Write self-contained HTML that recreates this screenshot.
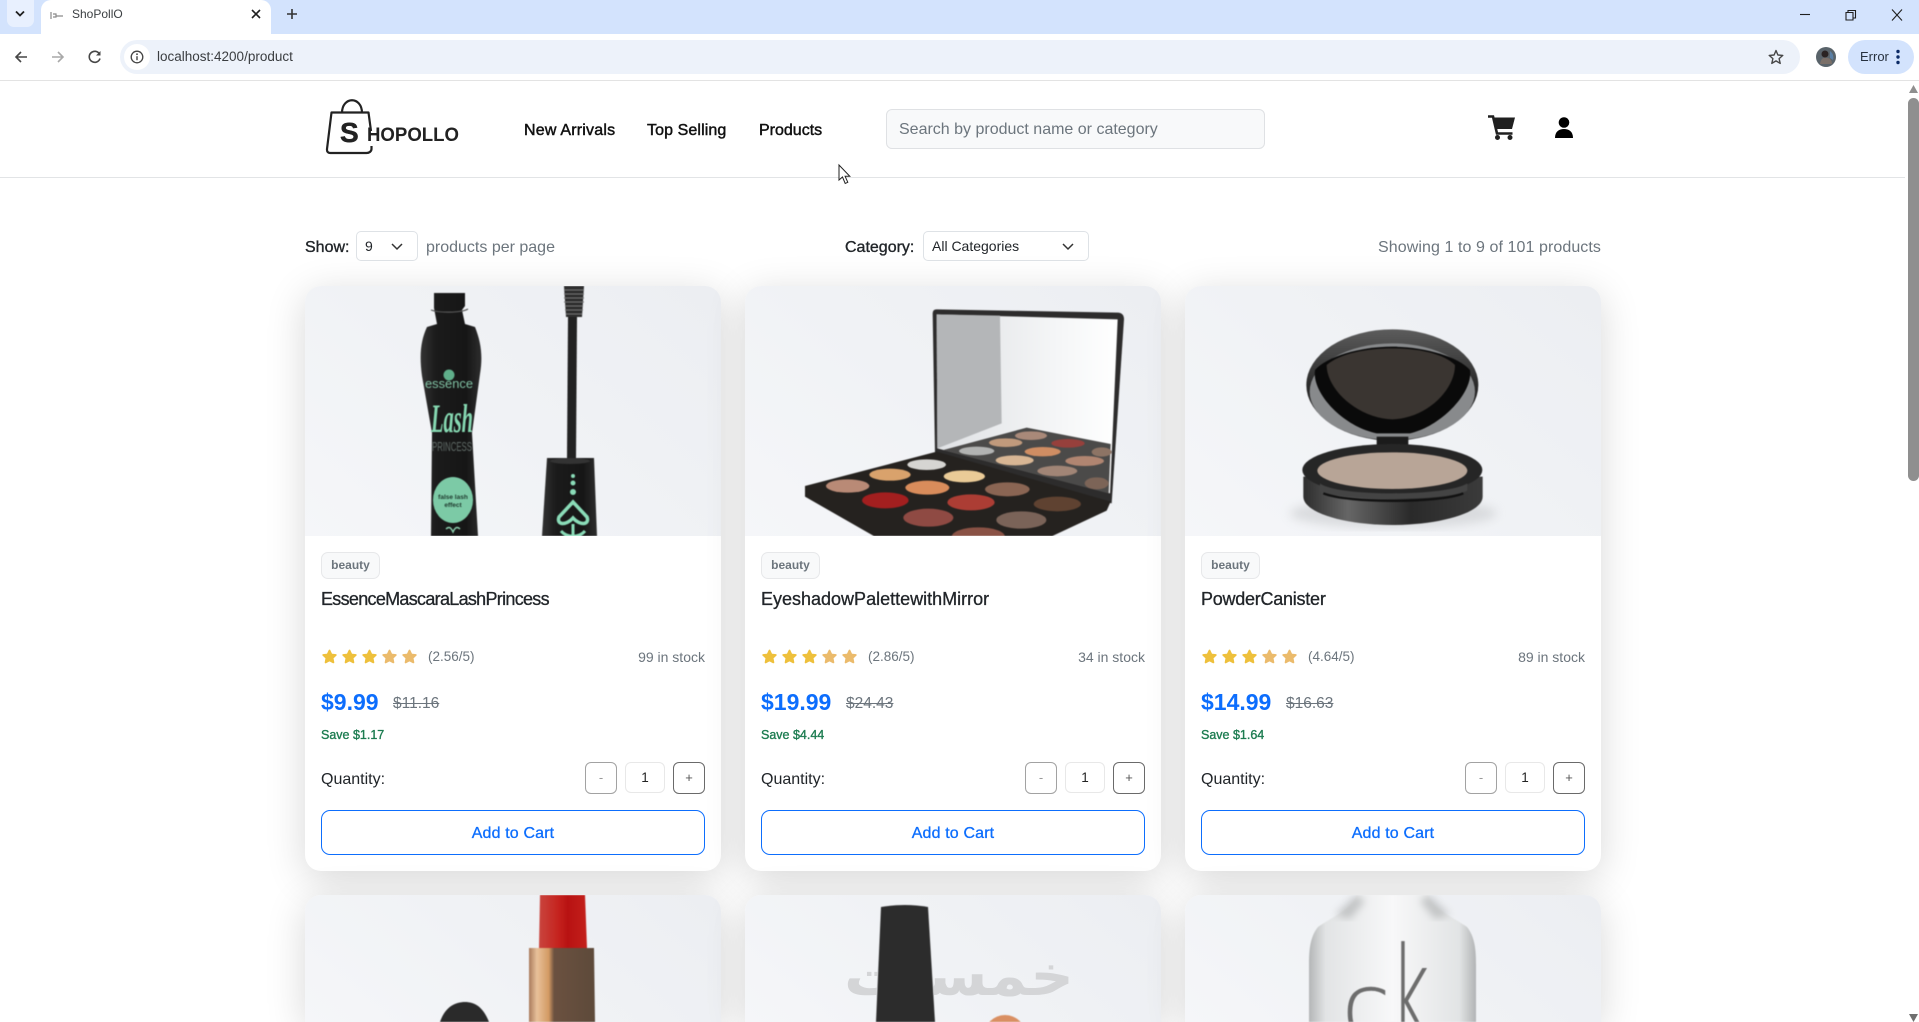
<!DOCTYPE html>
<html lang="en">
<head>
<meta charset="utf-8">
<title>ShoPollO</title>
<style>
*{box-sizing:border-box;margin:0;padding:0}
html,body{width:1919px;height:1022px;overflow:hidden;background:#fff}
body{position:relative;font-family:"Liberation Sans",Arial,sans-serif;color:#212529}
.a{position:absolute;white-space:nowrap}
svg{display:block;overflow:visible}
.t{line-height:20px}
.nav{top:120px;font-size:16px;font-weight:400;-webkit-text-stroke:.45px #111;color:#111;line-height:22px}
.sel{border:1px solid #dee2e6;border-radius:5px;background:#fff;height:30px}
#view{position:absolute;left:0;top:0;width:1919px;height:1022px;overflow:hidden}
.card{position:absolute;width:416px;height:585px;background:#fff;border-radius:16px;box-shadow:0 8px 40px rgba(0,0,0,.155)}
.img{position:absolute;left:0;top:0;width:416px;height:250px;border-radius:16px 16px 0 0;overflow:hidden;background:linear-gradient(40deg,#f5f6f9 0%,#f0f2f5 50%,#eceef2 100%)}
.img svg{filter:blur(.45px);overflow:hidden}
.badge{position:absolute;left:16px;top:266px;width:59px;height:27px;border:1px solid #e7e8ea;border-radius:7px;background:#f8f9fa;color:#6c757d;font-size:12px;font-weight:700;line-height:25px;text-align:center}
.title{position:absolute;left:16px;top:301px;font-size:18px;line-height:24px;color:#212529;-webkit-text-stroke:.3px #212529;white-space:nowrap}
.stars{position:absolute;left:17px;top:363px}
.rate{position:absolute;left:123px;top:361px;font-size:13.5px;line-height:20px;color:#6c757d}
.stock{position:absolute;right:16px;top:361px;font-size:14px;line-height:20px;color:#6c757d}
.price{position:absolute;left:16px;top:401px;font-size:23px;line-height:30px;font-weight:700;color:#0d6efd}
.old{position:absolute;top:408px;font-size:15.5px;line-height:20px;color:#6c757d;text-decoration:line-through}
.save{position:absolute;left:16px;top:439px;font-size:12.5px;line-height:21px;color:#1c7c50;-webkit-text-stroke:.35px #1c7c50}
.qty{position:absolute;left:16px;top:483px;font-size:16px;line-height:22px;color:#212529}
.b{position:absolute;top:476px;width:32px;height:32px;border-radius:6px;background:#fff;text-align:center;font-size:13px;line-height:30px}
.minus{left:280px;border:1px solid #a2a2a2;color:#999}
.plus{left:368px;border:1px solid #6a6a6a;color:#555}
.num{position:absolute;left:320px;top:476px;width:40px;height:31px;border:1px solid #e8e8e8;border-radius:6px;font-size:13.5px;line-height:29px;text-align:center;color:#222}
.add{position:absolute;left:16px;top:524px;width:384px;height:45px;border:1px solid #0d6efd;border-radius:9px;color:#0d6efd;font-size:16px;line-height:45px;text-align:center;letter-spacing:.15px;-webkit-text-stroke:.3px #0d6efd}
</style>
</head>
<body>
<div id="view">
<svg width="0" height="0" style="position:absolute"><defs>
<g id="star"><path d="M7.5 1.5 9.4 5.5 13.8 6 10.6 9 11.4 13.4 7.500 11.300 3.600 13.400 4.400 9 1.200 6 5.600 5.500Z" stroke-width="1.800" stroke-linejoin="round"/></g>
<g id="five">
<use href="#star" x="0" fill="#eec03c" stroke="#eec03c"/>
<use href="#star" x="20" fill="#eec03c" stroke="#eec03c"/>
<use href="#star" x="40" fill="#eec03c" stroke="#eec03c"/>
<use href="#star" x="60" fill="#ebbb6c" stroke="#ebbb6c"/>
<use href="#star" x="80" fill="#ebbb6c" stroke="#ebbb6c"/>
</g>
<linearGradient id="tube" x1="0" x2="1" y1="0" y2="0"><stop offset="0" stop-color="#333"/><stop offset=".25" stop-color="#1b1b1b"/><stop offset=".75" stop-color="#161616"/><stop offset="1" stop-color="#2d2d2d"/></linearGradient>
<linearGradient id="mir" x1="0" x2="1" y1="0" y2="0"><stop offset="0" stop-color="#dfe1e4"/><stop offset=".7" stop-color="#f6f7f8"/><stop offset="1" stop-color="#fff"/></linearGradient>
<linearGradient id="lid" x1="0" x2="0" y1="0" y2="1"><stop offset="0" stop-color="#5c5c5c"/><stop offset=".5" stop-color="#2a2a2a"/><stop offset="1" stop-color="#141414"/></linearGradient>
<linearGradient id="base" x1="0" x2="1" y1="0" y2="0"><stop offset="0" stop-color="#2d2d2d"/><stop offset=".25" stop-color="#666"/><stop offset=".6" stop-color="#2a2a2a"/><stop offset="1" stop-color="#3b3b3b"/></linearGradient>
<linearGradient id="gold" x1="0" x2="1" y1="0" y2="0"><stop offset="0" stop-color="#a97a5c"/><stop offset=".12" stop-color="#e8c19a"/><stop offset=".3" stop-color="#d39a63"/><stop offset=".38" stop-color="#6b5140"/><stop offset="1" stop-color="#5d4a3a"/></linearGradient>
<linearGradient id="red" x1="0" x2="1" y1="0" y2="0"><stop offset="0" stop-color="#c9453e"/><stop offset=".4" stop-color="#c5231e"/><stop offset=".6" stop-color="#b81212"/><stop offset="1" stop-color="#c3201b"/></linearGradient>
<linearGradient id="glass" x1="0" x2="1" y1="0" y2="0"><stop offset="0" stop-color="#b4b6b7"/><stop offset=".1" stop-color="#e2e4e5"/><stop offset=".5" stop-color="#f8f8f9"/><stop offset=".9" stop-color="#e2e4e5"/><stop offset="1" stop-color="#b2b4b5"/></linearGradient>
<filter id="soft"><feGaussianBlur stdDeviation="14"/></filter>
<filter id="soft2"><feGaussianBlur stdDeviation="4"/></filter>
</defs></svg>

<!-- browser chrome -->
<div class="a" style="left:0;top:0;width:1919px;height:34px;background:#d3e3fd"></div>
<div class="a" style="left:7px;top:0;width:27px;height:27px;background:#e8f0fe;border-radius:0 0 7px 7px"></div>
<svg class="a" style="left:15px;top:10px" width="10" height="8"><path d="M1 1.500 5 5.500 9 1.500" fill="none" stroke="#1f1f1f" stroke-width="1.800"/></svg>
<div class="a" style="left:41px;top:0;width:230px;height:36px;background:#fff;border-radius:10px 10px 0 0"></div>
<svg class="a" style="left:50px;top:12px" width="14" height="8"><path d="M1 0v7M3 2h3v3H3M6 4h7" fill="none" stroke="#8a8a8a" stroke-width="1.200"/></svg>
<div class="a" style="left:72px;top:6px;font-size:12px;line-height:17px;color:#3c4043">ShoPollO</div>
<svg class="a" style="left:251px;top:9px" width="10" height="10"><path d="M1 1 9 9M9 1 1 9" stroke="#1f1f1f" stroke-width="1.600"/></svg>
<svg class="a" style="left:286px;top:8px" width="12" height="12"><path d="M6 1v10M1 6h10" stroke="#333" stroke-width="1.600"/></svg>
<svg class="a" style="left:1799px;top:8px" width="110" height="14"><path d="M1 6.500H11" stroke="#1f1f1f" stroke-width="1.100"/><path d="M47 4.500h7v7.500h-7zM49 4.500V2.500h7.500V10h-2.500" fill="none" stroke="#1f1f1f" stroke-width="1.100"/><path d="M93 1.500 103 12.500M103 1.500 93 12.500" stroke="#1f1f1f" stroke-width="1.100"/></svg>
<div class="a" style="left:0;top:34px;width:1919px;height:46px;background:#fff;border-radius:8px 8px 0 0"></div>
<div class="a" style="left:0;top:80px;width:1919px;height:1px;background:#e3e3e3"></div>
<svg class="a" style="left:14px;top:50px" width="90" height="14">
<path d="M13 7H2M7 2 2 7l5 5" fill="none" stroke="#474747" stroke-width="1.600"/>
<path d="M38 7H49M44 2l5 5-5 5" fill="none" stroke="#a9a9a9" stroke-width="1.600"/>
<path d="M85.500 4A5.500 5.500 0 1 0 86 8.500" fill="none" stroke="#474747" stroke-width="1.600"/><path d="M86.500 1v4.500H82z" fill="#474747"/>
</svg>
<div class="a" style="left:120px;top:40px;width:1680px;height:34px;background:#edf2fa;border-radius:17px"></div>
<div class="a" style="left:124px;top:44px;width:26px;height:26px;background:#fff;border-radius:50%"></div>
<svg class="a" style="left:130px;top:50px" width="14" height="14"><circle cx="7" cy="7" r="5.800" fill="none" stroke="#444" stroke-width="1.300"/><path d="M7 6.200v4" stroke="#444" stroke-width="1.400"/><circle cx="7" cy="4.200" r=".9" fill="#444"/></svg>
<div class="a" style="left:157px;top:47px;font-size:13.5px;line-height:20px;color:#3a3d40">localhost:4200/product</div>
<svg class="a" style="left:1768px;top:49px" width="16" height="16"><path d="M8 1.500 9.900 6 14.800 6.400 11.100 9.600 12.200 14.400 8 11.900 3.800 14.400 4.900 9.600 1.200 6.400 6.100 6Z" fill="none" stroke="#474747" stroke-width="1.400" stroke-linejoin="round"/></svg>
<svg class="a" style="left:1816px;top:47px" width="20" height="20"><circle cx="10" cy="10" r="10" fill="#59636a"/><circle cx="9" cy="7" r="3.500" fill="#2a2322"/><path d="M4 17c1-6 4-7 7-6 3 0 5 2 5 6z" fill="#7a6f68"/><path d="M14 4c3 2 4 6 3 9l-3-2z" fill="#5a7fa5"/></svg>
<div class="a" style="left:1848px;top:40px;width:66px;height:34px;background:#d3e3fd;border-radius:17px"></div>
<div class="a" style="left:1860px;top:47px;font-size:13px;line-height:20px;color:#27313f">Error</div>
<svg class="a" style="left:1896px;top:49px" width="4" height="16"><circle cx="2" cy="2.500" r="1.700" fill="#0b2a66"/><circle cx="2" cy="8" r="1.700" fill="#0b2a66"/><circle cx="2" cy="13.500" r="1.700" fill="#0b2a66"/></svg>

<!-- site header -->
<div class="a" style="left:0;top:177px;width:1905px;height:1px;background:#e2e4e6"></div>
<svg class="a" style="left:326px;top:99px" width="136" height="56">
<path d="M16 14C16 -3 36 -3 36 14" fill="none" stroke="#222" stroke-width="2.200"/>
<path d="M40.500 54H4.500C1.800 54 .8 52.500 1 50L5.500 13.500H42.500L45 32M45.500 47V50C45.500 52.500 43 54 40.500 54" fill="none" stroke="#222" stroke-width="2.200" stroke-linejoin="round"/>
<text x="14" y="43" font-family="Liberation Sans" font-weight="700" font-size="28" fill="#222" stroke="#222" stroke-width=".5">S</text>
<text x="41" y="42" font-family="Liberation Sans" font-weight="700" font-size="19.500" fill="#222" textLength="92" lengthAdjust="spacingAndGlyphs">HOPOLLO</text>
</svg>
<div class="a nav" style="left:524px;letter-spacing:.2px">New Arrivals</div>
<div class="a nav" style="left:647px;letter-spacing:.1px">Top Selling</div>
<div class="a nav" style="left:759px">Products</div>
<div class="a" style="left:886px;top:109px;width:379px;height:40px;background:#f8f9fa;border:1px solid #dfe1e4;border-radius:6px;padding-left:12px;font-size:16px;line-height:40px;color:#6c757d">Search by product name or category</div>
<svg class="a" style="left:1488px;top:115px" width="28" height="26">
<path d="M0 1.500H5L9 18.500H24.500" fill="none" stroke="#202020" stroke-width="2.600"/>
<path d="M5.500 2.500H27L24 14H8Z" fill="#202020"/>
<circle cx="9.500" cy="22.500" r="2.500" fill="#202020"/><circle cx="22" cy="22.500" r="2.500" fill="#202020"/>
</svg>
<svg class="a" style="left:1555px;top:117px" width="18" height="21"><circle cx="9" cy="5.500" r="5.300" fill="#000"/><path d="M0 21C0 14.500 4 12 9 12S18 14.500 18 21Z" fill="#000"/></svg>

<!-- controls -->
<div class="a t" style="left:305px;top:238px;font-size:16px;-webkit-text-stroke:.35px #212529">Show:</div>
<div class="a sel" style="left:356px;top:231px;width:62px"></div>
<div class="a t" style="left:365px;top:236px;font-size:14px">9</div>
<svg class="a" style="left:391px;top:243px" width="12" height="8"><path d="M1 1 6 6 11 1" fill="none" stroke="#333" stroke-width="1.500"/></svg>
<div class="a t" style="left:426px;top:238px;font-size:16px;color:#6c757d">products per page</div>
<div class="a t" style="left:845px;top:238px;font-size:16px;-webkit-text-stroke:.35px #212529">Category:</div>
<div class="a sel" style="left:923px;top:231px;width:166px"></div>
<div class="a t" style="left:932px;top:236px;font-size:14px">All Categories</div>
<svg class="a" style="left:1062px;top:243px" width="12" height="8"><path d="M1 1 6 6 11 1" fill="none" stroke="#333" stroke-width="1.500"/></svg>
<div class="a t" style="right:318px;top:238px;font-size:16px;color:#6c757d;letter-spacing:.08px">Showing 1 to 9 of 101 products</div>

<!-- row 1 -->
<div class="card" style="left:305px;top:286px">
  <div class="img"><svg width="416" height="250" viewBox="0 0 416 250">
    <path d="M129 7H160V20L157 24 160 38 170 41C176 56 178 70 175 88L167 147 173 250H126L127 147 117 90C114 68 116 54 122 41L132 38 129 22Z" fill="url(#tube)"/>
    <path d="M126 24c8 3 30 3 37-1" fill="none" stroke="#555" stroke-width="1.200"/>
    <circle cx="144" cy="89" r="5.500" fill="#5fae8a"/>
    <text x="144" y="102" text-anchor="middle" font-size="13" fill="#7fc0a2" font-family="Liberation Sans" textLength="48" lengthAdjust="spacingAndGlyphs">essence</text>
    <text x="147" y="146" text-anchor="middle" font-size="40" font-style="italic" font-weight="700" fill="#86d9b2" font-family="Liberation Serif" textLength="42" lengthAdjust="spacingAndGlyphs">Lash</text>
    <text x="147" y="165" text-anchor="middle" font-size="13" fill="#5f6a66" font-family="Liberation Sans" textLength="40" lengthAdjust="spacingAndGlyphs">PRINCESS</text>
    <ellipse cx="148" cy="214" rx="20" ry="23" fill="#7ccaa6"/>
    <text x="148" y="213" text-anchor="middle" font-size="6.500" font-weight="700" fill="#1f3a2e" font-family="Liberation Sans">false lash</text>
    <text x="148" y="221" text-anchor="middle" font-size="6.500" font-weight="700" fill="#1f3a2e" font-family="Liberation Sans">effect</text>
    <path d="M141 243c4-4 6 1 7 3 1-2 3-7 7-3" fill="none" stroke="#8ccfae" stroke-width="1.400"/>
    <path d="M259 0H279L277 31H261Z" fill="#2e2e2e"/>
    <path d="M259 4H279M259 8H279M259 12H279M259 16H279M260 20H278M260 24H278M261 28H277" stroke="#777" stroke-width="1"/>
    <path d="M263 31H272L271 172H262Z" fill="#222"/>
    <path d="M242 172H289L292 250H237Z" fill="url(#tube)"/>
    <ellipse cx="265" cy="175" rx="20" ry="3" fill="#333"/>
    <circle cx="268" cy="190" r="2" fill="#8adcb8"/><circle cx="268" cy="197" r="2.500" fill="#8adcb8"/><circle cx="268" cy="206" r="3" fill="#8adcb8"/>
    <path d="M268 216 282 231C285 239 275 240 268 232 261 240 251 239 254 231Z" fill="none" stroke="#8adcb8" stroke-width="3.500"/>
    <path d="M256 245C262 252 274 252 280 245M268 238V250" fill="none" stroke="#8adcb8" stroke-width="3"/>
  </svg></div>
  <div class="badge">beauty</div>
  <div class="title" style="letter-spacing:-.7px">EssenceMascaraLashPrincess</div>
  <svg class="stars" width="100" height="16"><use href="#five"/></svg>
  <div class="rate">(2.56/5)</div>
  <div class="stock">99 in stock</div>
  <div class="price">$9.99</div>
  <div class="old" style="left:88px">$11.16</div>
  <div class="save">Save $1.17</div>
  <div class="qty">Quantity:</div>
  <div class="b minus">-</div><div class="num">1</div><div class="b plus">+</div>
  <div class="add">Add to Cart</div>
</div>

<div class="card" style="left:745px;top:286px">
  <div class="img"><svg width="416" height="250" viewBox="0 0 416 250"><g transform="translate(-5 -6) scale(.33333)">
    <path d="M590 88 1135 98Q1152 100 1152 118L1115 670 585 520 578 100Q578 88 590 88Z" fill="#2d2c2c"/>
    <path d="M590 103 1133 118 1110 640 592 505Z" fill="url(#mir)"/>
    <path d="M590 103 780 107 785 430 592 505Z" fill="#b4b6b8"/>
    <path d="M610 510 860 443 1112 492 1106 640Z" fill="#4b4a49"/>
    <g>
    <ellipse cx="873" cy="467" rx="48" ry="13" fill="#a98979"/><ellipse cx="797" cy="488" rx="50" ry="13" fill="#c19a7c"/><ellipse cx="984" cy="490" rx="50" ry="13" fill="#96403c"/><ellipse cx="710" cy="513" rx="53" ry="13" fill="#b2b3b2"/><ellipse cx="908" cy="515" rx="54" ry="14" fill="#cf8d63"/><ellipse cx="1085" cy="516" rx="30" ry="14" fill="#8d7465"/><ellipse cx="824" cy="541" rx="57" ry="15" fill="#d8b694"/><ellipse cx="1034" cy="543" rx="58" ry="15" fill="#b08571"/><ellipse cx="952" cy="573" rx="60" ry="16" fill="#a18576"/><ellipse cx="1070" cy="610" rx="36" ry="18" fill="#7c6457"/>
    </g>
    <path d="M195 618 590 515 1112 665 1100 692 890 790H440L195 650Z" fill="#25221f"/>
    <ellipse cx="560" cy="554" rx="58" ry="16" fill="#d6d5d2"/><ellipse cx="450" cy="584" rx="62" ry="18" fill="#d9a26c"/><ellipse cx="673" cy="589" rx="62" ry="18" fill="#eacb97"/><ellipse cx="323" cy="618" rx="65" ry="20" fill="#b98a76"/><ellipse cx="562" cy="623" rx="66" ry="21" fill="#d98c5b"/><ellipse cx="802" cy="628" rx="67" ry="21" fill="#8a6553"/><ellipse cx="436" cy="661" rx="70" ry="24" fill="#a31f1f"/><ellipse cx="693" cy="667" rx="71" ry="24" fill="#ac3d34"/><ellipse cx="952" cy="672" rx="71" ry="22" fill="#5f4231"/><ellipse cx="565" cy="713" rx="75" ry="27" fill="#8f4a43"/><ellipse cx="844" cy="720" rx="75" ry="26" fill="#7a6358"/><ellipse cx="715" cy="770" rx="80" ry="28" fill="#8a5245"/>
  </g></svg></div>
  <div class="badge">beauty</div>
  <div class="title">EyeshadowPalettewithMirror</div>
  <svg class="stars" width="100" height="16"><use href="#five"/></svg>
  <div class="rate">(2.86/5)</div>
  <div class="stock">34 in stock</div>
  <div class="price">$19.99</div>
  <div class="old" style="left:101px">$24.43</div>
  <div class="save">Save $4.44</div>
  <div class="qty">Quantity:</div>
  <div class="b minus">-</div><div class="num">1</div><div class="b plus">+</div>
  <div class="add">Add to Cart</div>
</div>

<div class="card" style="left:1185px;top:286px">
  <div class="img"><svg width="416" height="250" viewBox="0 0 416 250"><g transform="translate(-5 -6) scale(.33333)">
    <ellipse cx="640" cy="700" rx="310" ry="45" fill="#c9cbce" opacity=".6" filter="url(#soft)"/>
    <ellipse cx="637" cy="315" rx="258" ry="167" fill="url(#lid)"/>
    <ellipse cx="637" cy="335" rx="248" ry="145" fill="#888a8c"/>
    <path d="M405 270C440 230 540 200 637 200S835 230 870 270C880 340 780 440 690 460H590C490 440 395 340 405 270Z" fill="#0a0a0a"/>
    <path d="M440 255C480 220 560 205 637 205S790 220 825 255C825 330 740 415 637 418 535 415 440 330 440 255Z" fill="#3a3531"/>
    <rect x="590" y="470" width="95" height="30" fill="#1b1b1b"/>
    <path d="M370 590V650C370 700 500 735 637 735S908 700 908 650V590Z" fill="url(#base)"/>
    <ellipse cx="637" cy="570" rx="270" ry="78" fill="#262626"/>
    <ellipse cx="637" cy="572" rx="225" ry="55" fill="#b8a597"/>
    <path d="M420 610V632C470 665 800 665 862 632V610C800 650 470 650 420 610Z" fill="#444"/>
    <path d="M430 640C500 670 780 670 850 640" fill="none" stroke="#111" stroke-width="7"/>
  </g></svg></div>
  <div class="badge">beauty</div>
  <div class="title" style="letter-spacing:-.25px">PowderCanister</div>
  <svg class="stars" width="100" height="16"><use href="#five"/></svg>
  <div class="rate">(4.64/5)</div>
  <div class="stock">89 in stock</div>
  <div class="price">$14.99</div>
  <div class="old" style="left:101px">$16.63</div>
  <div class="save">Save $1.64</div>
  <div class="qty">Quantity:</div>
  <div class="b minus">-</div><div class="num">1</div><div class="b plus">+</div>
  <div class="add">Add to Cart</div>
</div>

<!-- row 2 -->
<div class="card" style="left:305px;top:895px;height:127px;border-radius:16px 16px 0 0">
  <div class="img" style="height:127px"><svg width="416" height="127" viewBox="0 0 416 127">
    <path d="M235 0H280L282 53H234Z" fill="url(#red)"/>
    <path d="M224 53H289L290 127H224Z" fill="url(#gold)"/>
    <path d="M135 127C140 112 150 107 160 107S178 112 184 127Z" fill="#2a2a2a"/>
  </svg></div>
</div>
<div class="card" style="left:745px;top:895px;height:127px;border-radius:16px 16px 0 0">
  <div class="img" style="height:127px"><svg width="416" height="127" viewBox="0 0 416 127">
    <path d="M136 12Q160 8 183 12L190 127H131Z" fill="#2c2c2c"/>
    <ellipse cx="260" cy="141" rx="21" ry="21" fill="#d98f62"/>
  </svg></div>
</div>
<div class="card" style="left:1185px;top:895px;height:127px;border-radius:16px 16px 0 0">
  <div class="img" style="height:127px"><svg width="416" height="127" viewBox="0 0 416 127">
    <path d="M171 0H244C248 14 268 22 282 32 290 42 291 55 291 70V127H124V70C124 55 125 42 133 32 147 22 167 14 171 0Z" fill="url(#glass)"/>
    <path d="M171 0 150 20 165 24 180 6ZM244 0 265 20 250 24 235 6Z" fill="#a9abac" opacity=".6" filter="url(#soft2)"/>
    <text x="157" y="142" font-family="DejaVu Sans" font-weight="200" font-size="88" fill="#6d6d6d" stroke="#6d6d6d" stroke-width=".6">c</text>
    <text transform="translate(206 142) scale(1 1.9)" font-family="DejaVu Sans" font-weight="200" font-size="66" fill="#6d6d6d" stroke="#6d6d6d" stroke-width=".4">k</text>
  </svg></div>
</div>

<!-- watermark -->
<svg class="a" style="left:843px;top:950px;mix-blend-mode:darken" width="232" height="56"><text x="116" y="45" text-anchor="middle" direction="rtl" font-family="DejaVu Sans" font-weight="700" font-size="56" fill="#d4d5d7" textLength="230" lengthAdjust="spacingAndGlyphs">خمسات</text></svg>

<!-- cursor -->
<svg class="a" style="left:838px;top:164px" width="14" height="21"><path d="M1 1V16L4.500 13 7.200 19.500 9.800 18.300 7.100 12.300H11.800Z" fill="#fff" stroke="#222" stroke-width="1"/></svg>

<!-- scrollbar -->
<div class="a" style="left:1905px;top:81px;width:14px;height:941px;background:#fff"></div>
<div class="a" style="left:1908px;top:98px;width:11px;height:383px;background:#8f8f8f;border-radius:6px"></div>
<svg class="a" style="left:1908px;top:85px" width="11" height="8"><path d="M5.500 0 10 8H1Z" fill="#8f8f8f"/></svg>
<svg class="a" style="left:1908px;top:1014px" width="11" height="8"><path d="M5.500 8 10 0H1Z" fill="#6f6f6f"/></svg>
</div>
</body>
</html>
